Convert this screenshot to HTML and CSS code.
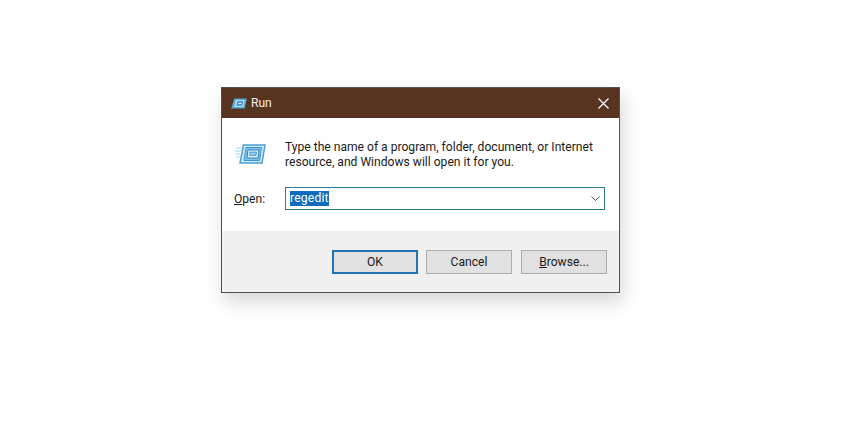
FILE: index.html
```html
<!DOCTYPE html>
<html lang="en">

<head>
    <meta charset="UTF-8">
    <title>Run</title>
    <link rel="stylesheet" href="styles.css">
</head>

<body>
    <div class="window">
        <div class="titlebar">
            <svg class="title-icon" width="16" height="11" viewBox="0 0 30 21">
                <path d="M6 1H30L26 20H0Z" fill="#5aa6d4" />
                <path d="M9 4H26L23 17H6Z" fill="#b4def2" />
                <path d="M12 6H23L21 15H10Z" fill="#3684bc" />
                <path d="M14 9H20L19.500 12H13.500Z" fill="#e6f5fc" />
            </svg>
            <span class="title-text">Run</span>
            <svg class="close-icon" width="11" height="11" viewBox="0 0 11 11">
                <path d="M0.500 0.500L10.500 10.500M10.500 0.500L0.500 10.500" stroke="#fff" stroke-width="1.200" fill="none" />
            </svg>
        </div>
        <div class="content">
            <div class="intro">
                <svg class="run-icon" width="31" height="20" viewBox="0 0 31 20">
                    <path d="M1 4H7M0 7H6M0 10H5M1 13H5" stroke="#a8d6ef" stroke-width="1" fill="none" />
                    <path d="M8.500 1H30L27 19H5Z" fill="#cfe9f8" stroke="#4a9fd4" stroke-width="1.500" />
                    <path d="M11 3.500H26.500L24.500 16.500H9Z" fill="#7fc1e8" stroke="#3f94cc" stroke-width="1" />
                    <path d="M13 6H24L23 14H12Z" fill="#e4f4fc" stroke="#2f83bd" stroke-width="1" />
                    <path d="M15 8H21.500L21 11.500H14.500Z" fill="#8ccaec" stroke="#2f83bd" stroke-width="0.700" />
                </svg>
                <p class="message">Type the name of a program, folder, document, or Internet<br>resource, and Windows will open it for you.</p>
            </div>
            <div class="open-row">
                <label class="open-label"><u>O</u>pen:</label>
                <div class="combo">
                    <span class="selected">regedit</span>
                    <svg class="chevron" width="9" height="5" viewBox="0 0 9 5">
                        <path d="M0.500 0.500L4.500 4.500L8.500 0.500" stroke="#444" stroke-width="1" fill="none" />
                    </svg>
                </div>
            </div>
        </div>
        <div class="footer">
            <div class="btn btn-default">OK</div>
            <div class="btn">Cancel</div>
            <div class="btn"><span><u>B</u>rowse...</span></div>
        </div>
    </div>
</body>

</html>
```

FILE: styles.css
```css
html,
body {
    margin: 0;
    height: 100%;
    background-color: #fff;
    overflow: hidden;
}

body {
    padding: 87px 0 0 221px;
    box-sizing: border-box;
    font-family: Roboto, "Noto Sans", sans-serif;
    font-size: 12.1px;
    color: #1a1a1a;
}

.window {
    width: 399px;
    height: 206px;
    box-sizing: border-box;
    border: 1px solid #55504c;
    display: flex;
    flex-direction: column;
    box-shadow: 3px 9px 18px rgba(0, 0, 0, 0.16);
}

.titlebar {
    height: 30px;
    background-color: #57341f;
    display: flex;
    align-items: center;
    padding: 0 10px 0 9px;
    flex-shrink: 0;
}

.title-icon {
    margin-right: 4px;
}

.title-text {
    color: #f4eeea;
    flex: 1;
}

.content {
    height: 113px;
    background-color: #fff;
    flex-shrink: 0;
    padding: 22px 14px 0 12px;
    box-sizing: border-box;
}

.intro {
    display: flex;
    align-items: flex-start;
}

.run-icon {
    margin: 4px 19px 0 1px;
    flex-shrink: 0;
}

.message {
    margin: 0;
    line-height: 15px;
    white-space: nowrap;
}

.open-row {
    display: flex;
    align-items: center;
    margin-top: 17px;
}

.open-label {
    width: 51px;
}

.combo {
    width: 320px;
    height: 23px;
    box-sizing: border-box;
    border: 1px solid #2a7a94;
    display: flex;
    align-items: center;
    justify-content: space-between;
    padding: 0 4px;
}

.selected {
    background-color: #0f6cbd;
    color: #fff;
    line-height: 15px;
    letter-spacing: 0.2px;
}

.footer {
    flex: 1;
    background-color: #f0f0f0;
    display: flex;
    justify-content: flex-end;
    align-items: flex-start;
    gap: 9px;
    padding: 19px 12px 0 0;
}

.btn {
    width: 86px;
    height: 24px;
    box-sizing: border-box;
    border: 1px solid #adadad;
    background-color: #e1e1e1;
    display: flex;
    align-items: center;
    justify-content: center;
}

.btn-default {
    border: 2px solid #1f74b8;
    margin-right: -1px;
}
```
